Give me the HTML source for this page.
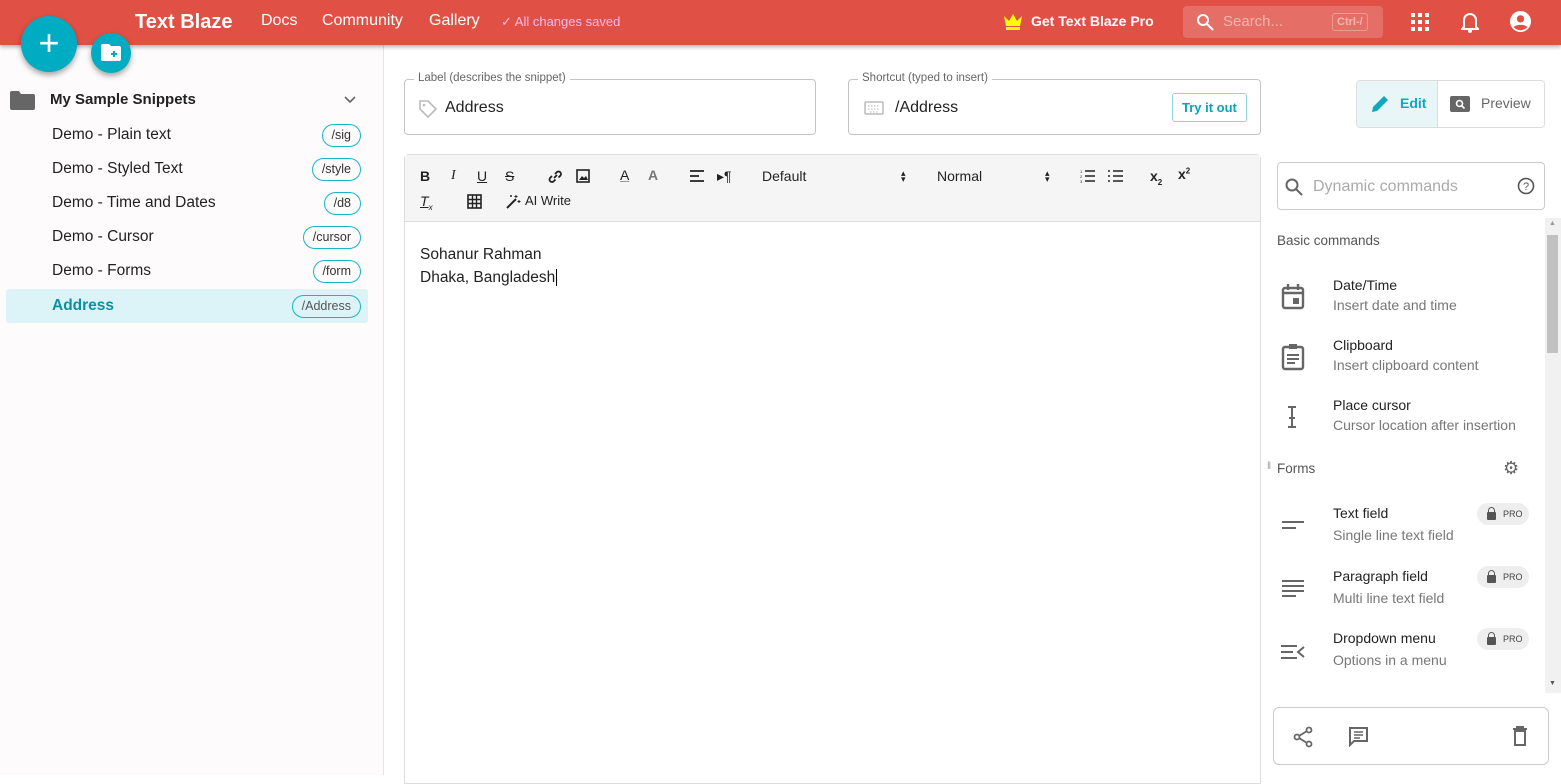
<!DOCTYPE html>
<html><head><meta charset="utf-8"><style>
*{box-sizing:border-box;margin:0;padding:0}
body{width:1561px;height:775px;overflow:hidden;font-family:"Liberation Sans",sans-serif;background:#fff;position:relative;color:#222}
.a{position:absolute}
#hdr{left:0;top:0;width:1561px;height:45px;background:#e05045;box-shadow:0 2px 4px rgba(0,0,0,.3);z-index:2}
#hdr .t{color:#fff;position:absolute;top:12px;font-size:16px}
#side{left:0;top:45px;width:384px;height:730px;background:#fdfbfc;border-right:1px solid #e4e4e4}
.it{position:absolute;left:6px;width:362px;height:34px}
.it span.n{position:absolute;left:46px;top:8px;font-size:15.5px;color:#222}
.it span.b{position:absolute;right:7px;top:6px;height:23px;border:1.5px solid #1ab5c9;border-radius:12px;font-size:12.5px;padding:3px 9px;color:#333}
.fab{border-radius:50%;background:#00acc1;box-shadow:0 3px 6px rgba(0,0,0,.35);z-index:3;color:#fff;text-align:center}
.fs{border:1px solid #c4c4c4;border-radius:4px;height:56px}
.lg{position:absolute;top:-8px;left:9px;background:#fff;padding:0 4px;font-size:11.5px;color:#666}
.tb{font-size:14px;color:#222;position:absolute}
.cmd{position:absolute;left:1277px;width:260px}
.cmd .h{position:absolute;left:56px;font-size:14px;color:#222}
.cmd .s{position:absolute;left:56px;top:20px;font-size:14px;color:#777}
.pro{position:absolute;left:200px;top:-2px;width:52px;height:22px;background:#eee;border-radius:11px;font-size:9px;color:#444;padding:6px 0 0 26px}
.pro:before{content:"";position:absolute;left:10px;top:9px;width:9px;height:8px;background:#555;border-radius:1px}
.pro:after{content:"";position:absolute;left:11px;top:4px;width:5px;height:6px;border:1.5px solid #555;border-bottom:none;border-radius:4px 4px 0 0}
</style></head><body>
<div id="hdr" class="a">
<span class="t" style="left:135px;top:11px;font-size:20px;font-weight:bold">Text Blaze</span>
<span class="t" style="left:261px">Docs</span>
<span class="t" style="left:322px">Community</span>
<span class="t" style="left:429px">Gallery</span>
<span class="t" style="left:501px;top:14px;font-size:13px;color:#fbe">✓ All changes saved</span>
<svg class="a" style="left:1003px;top:13px" width="20" height="18" viewBox="0 0 20 18"><path d="M1 3l5 5 4-7 4 7 5-5-2 10H3z" fill="#ff0"/><rect x="3" y="14" width="14" height="3" fill="#ff0"/></svg>
<span class="t" style="left:1031px;top:13px;font-size:14px;font-weight:bold">Get Text Blaze Pro</span>
<div class="a" style="left:1183px;top:6px;width:200px;height:32px;background:rgba(255,255,255,.18);border-radius:4px">
<svg class="a" style="left:13px;top:7px" width="18" height="18" viewBox="0 0 18 18"><circle cx="7" cy="7" r="5" stroke="#fff" stroke-width="2" fill="none"/><path d="M11 11l6 6" stroke="#fff" stroke-width="2"/></svg>
<span class="a" style="left:40px;top:7px;color:#f5b5ae;font-size:15px">Search...</span>
<span class="a" style="left:149px;top:7px;border:1px solid rgba(255,255,255,.3);border-radius:3px;font-size:11px;color:#f5b5ae;padding:2px 4px;font-weight:bold">Ctrl-/</span></div>
<svg class="a" style="left:1411px;top:13px" width="18" height="18" viewBox="0 0 18 18" fill="#fff"><rect x="0" y="0" width="4" height="4"/><rect x="7" y="0" width="4" height="4"/><rect x="14" y="0" width="4" height="4"/><rect x="0" y="7" width="4" height="4"/><rect x="7" y="7" width="4" height="4"/><rect x="14" y="7" width="4" height="4"/><rect x="0" y="14" width="4" height="4"/><rect x="7" y="14" width="4" height="4"/><rect x="14" y="14" width="4" height="4"/></svg>
<svg class="a" style="left:1461px;top:11px" width="18" height="22" viewBox="0 0 18 22"><path d="M3 16V9a6 6 0 0112 0v7l2 2H1z" fill="none" stroke="#fff" stroke-width="2"/><circle cx="9" cy="20" r="2" fill="#fff"/></svg>
<svg class="a" style="left:1510px;top:11px" width="21" height="21" viewBox="0 0 20 20"><circle cx="10" cy="10" r="10" fill="#fff"/><circle cx="10" cy="7.5" r="3.5" fill="#e05045"/><path d="M3.5 15.5c2-3 11-3 13 0a9 9 0 01-13 0z" fill="#e05045"/></svg>
</div>
<div class="a fab" style="left:21px;top:16px;width:56px;height:56px;font-size:36px;line-height:54px">+</div>
<div class="a fab" style="left:91px;top:33px;width:40px;height:40px"><svg style="margin-top:11px" width="20" height="17" viewBox="0 0 20 17"><path d="M0 2a2 2 0 012-2h6l2 2h8a2 2 0 012 2v11a2 2 0 01-2 2H2a2 2 0 01-2-2z" fill="#fff"/><path d="M13 7v6M10 10h6" stroke="#00acc1" stroke-width="2"/></svg></div>
<div id="side" class="a">
<svg class="a" style="left:10px;top:46px" width="25" height="19" viewBox="0 0 25 19"><path d="M0 2a2 2 0 012-2h7l2 3h12a2 2 0 012 2v12a2 2 0 01-2 2H2a2 2 0 01-2-2z" fill="#666"/></svg>
<span class="a" style="left:50px;top:46px;font-size:15px;font-weight:bold">My Sample Snippets</span>
<svg class="a" style="left:344px;top:51px" width="12" height="8" viewBox="0 0 12 8"><path d="M1 1l5 5 5-5" stroke="#666" stroke-width="1.6" fill="none"/></svg>
<div class="it" style="top:73px"><span class="n">Demo - Plain text</span><span class="b">/sig</span></div>
<div class="it" style="top:107px"><span class="n">Demo - Styled Text</span><span class="b">/style</span></div>
<div class="it" style="top:141px"><span class="n">Demo - Time and Dates</span><span class="b">/d8</span></div>
<div class="it" style="top:175px"><span class="n">Demo - Cursor</span><span class="b">/cursor</span></div>
<div class="it" style="top:209px"><span class="n">Demo - Forms</span><span class="b">/form</span></div>
<div class="it" style="top:244px;background:#dcf3f7;border-radius:3px"><span class="n" style="color:#0e8fa0;font-weight:bold">Address</span><span class="b" style="color:#555">/Address</span></div>
</div>
<div class="a fs" style="left:404px;top:79px;width:412px"><span class="lg">Label (describes the snippet)</span>
<svg class="a" style="left:13px;top:19px" width="20" height="20" viewBox="0 0 20 20"><path d="M2 2h8l8 8-8 8-8-8z" fill="none" stroke="#bbb" stroke-width="1.6"/><circle cx="6" cy="6" r="1.3" fill="#bbb"/></svg>
<span class="a" style="left:40px;top:19px;font-size:16px">Address</span></div>
<div class="a fs" style="left:848px;top:79px;width:413px"><span class="lg">Shortcut (typed to insert)</span>
<svg class="a" style="left:15px;top:21px" width="20" height="14" viewBox="0 0 20 14"><rect x="1" y="1" width="18" height="12" rx="1" fill="none" stroke="#bbb" stroke-width="1.5"/><path d="M4 5h12M4 8h12M6 11h8" stroke="#bbb" stroke-dasharray="1.5 1.5"/></svg>
<span class="a" style="left:46px;top:19px;font-size:16px">/Address</span>
<span class="a" style="left:323px;top:13px;border:1px solid #8fd7e0;border-radius:3px;color:#0aa3b8;font-size:13px;font-weight:bold;padding:6px 9px">Try it out</span></div>
<div class="a" style="left:1356px;top:80px;width:189px;height:48px;border:1px solid #ddd;border-radius:4px;overflow:hidden">
<div class="a" style="left:0;top:0;width:81px;height:48px;background:#e8f6f8;border-right:1px solid #ddd"></div>
<svg class="a" style="left:13px;top:13px" width="20" height="20" viewBox="0 0 20 20"><path d="M2 18l1-5L14 2l4 4L7 17z" fill="#12a8bb"/></svg>
<span class="a" style="left:43px;top:14px;color:#12a8bb;font-size:14px;font-weight:bold">Edit</span>
<svg class="a" style="left:93px;top:15px" width="20" height="16" viewBox="0 0 20 16"><rect width="20" height="16" rx="2" fill="#666"/><circle cx="9.5" cy="7.5" r="3" stroke="#fff" stroke-width="1.6" fill="none"/><path d="M11.5 9.5l3 3" stroke="#fff" stroke-width="1.6"/></svg>
<span class="a" style="left:124px;top:14px;color:#666;font-size:14px">Preview</span></div>
<div class="a" style="left:404px;top:154px;width:857px;height:630px;border:1px solid #ddd;border-radius:5px 5px 0 0">
<div class="a" style="left:0;top:0;width:855px;height:67px;background:#f5f5f5;border-bottom:1px solid #ddd">
<span class="tb" style="left:15px;top:13px;font-weight:bold">B</span>
<span class="tb" style="left:46px;top:13px;font-style:italic;font-family:'Liberation Serif'">I</span>
<span class="tb" style="left:72px;top:13px;text-decoration:underline">U</span>
<span class="tb" style="left:100px;top:13px;text-decoration:line-through">S</span>
<svg class="a" style="left:142px;top:14px" width="16" height="16" viewBox="0 0 16 16"><path d="M7 9l3-3M5 7L3 9a2.5 2.5 0 003.5 3.5L8.5 10.5M8 5l2-2a2.5 2.5 0 013.5 3.5L11.5 8.5" stroke="#222" stroke-width="1.8" fill="none"/></svg>
<svg class="a" style="left:171px;top:14px" width="14" height="14"><rect x="1" y="1" width="12" height="12" fill="none" stroke="#222" stroke-width="1.6"/><path d="M3 11l3-4 2 2 2-2 2 4z" fill="#222"/></svg>
<span class="tb" style="left:215px;top:12px;text-decoration:underline;text-decoration-color:#999">A</span>
<span class="tb" style="left:243px;top:12px;color:#777;font-weight:bold">A</span>
<svg class="a" style="left:285px;top:15px" width="14" height="12"><path d="M0 1h14M0 6h9M0 11h14" stroke="#222" stroke-width="1.8"/></svg>
<span class="tb" style="left:312px;top:13px">▸¶</span>
<span class="tb" style="left:357px;top:13px">Default</span>
<span class="tb" style="left:532px;top:13px">Normal</span>
<span class="tb" style="left:496px;top:15px;font-size:9px;line-height:6px">▴<br>▾</span>
<span class="tb" style="left:640px;top:15px;font-size:9px;line-height:6px">▴<br>▾</span>
<svg class="a" style="left:675px;top:14px" width="15" height="14"><path d="M5 2h10M5 7h10M5 12h10" stroke="#222" stroke-width="1.6"/><text x="0" y="4" font-size="4" fill="#222">1</text><text x="0" y="9" font-size="4" fill="#222">2</text><text x="0" y="14" font-size="4" fill="#222">3</text></svg>
<svg class="a" style="left:703px;top:14px" width="15" height="14"><path d="M5 2h10M5 7h10M5 12h10M0 2h2M0 7h2M0 12h2" stroke="#222" stroke-width="1.6"/></svg>
<span class="tb" style="left:745px;top:13px;font-weight:bold">x<sub style="font-size:8px">2</sub></span>
<span class="tb" style="left:773px;top:11px;font-weight:bold">x<sup style="font-size:8px">2</sup></span>
<span class="tb" style="left:15px;top:38px;font-style:italic;text-decoration:underline">T<sub style="font-size:8px">x</sub></span>
<svg class="a" style="left:62px;top:39px" width="15" height="15"><rect x="1" y="1" width="13" height="13" fill="none" stroke="#222" stroke-width="1.6"/><path d="M1 5.5h13M1 9.5h13M5.5 1v13M9.5 1v13" stroke="#222" stroke-width="1.4"/></svg>
<svg class="a" style="left:100px;top:39px" width="16" height="16" viewBox="0 0 16 16"><path d="M2 14l9-9" stroke="#222" stroke-width="2"/><path d="M11 1v3M9.5 2.5h3M14 6v3M12.5 7.5h3M6 1v2M5 2h2" stroke="#222" stroke-width="1"/></svg>
<span class="tb" style="left:120px;top:38px;font-size:13px">AI Write</span>
</div>
<div class="a" style="left:15px;top:88px;font-size:15.5px;line-height:23px">Sohanur Rahman<br>Dhaka, Bangladesh<span style="border-left:1px solid #000;margin-left:1px"></span></div>
</div>
<div class="a" style="left:1277px;top:162px;width:268px;height:48px;border:1px solid #ccc;border-radius:4px">
<svg class="a" style="left:6px;top:14px" width="20" height="20" viewBox="0 0 20 20"><circle cx="8" cy="8" r="5.5" stroke="#666" stroke-width="2" fill="none"/><path d="M12 12l6 6" stroke="#666" stroke-width="2"/></svg>
<span class="a" style="left:35px;top:15px;font-size:16px;color:#aaa">Dynamic commands</span>
<svg class="a" style="left:239px;top:14px" width="18" height="18"><circle cx="9" cy="9" r="7.5" stroke="#555" stroke-width="1.6" fill="none"/><text x="9" y="13" font-size="11" text-anchor="middle" fill="#555" font-family="Liberation Sans">?</text></svg></div>
<div class="a" style="left:1545px;top:218px;width:16px;height:475px;background:#f1f1f1"><div class="a" style="left:2px;top:17px;width:11px;height:118px;background:#c1c1c1"></div><span class="a" style="left:4px;top:2px;font-size:7px;color:#999">▲</span><span class="a" style="left:4px;top:462px;font-size:7px;color:#555">▼</span></div>
<span class="a" style="left:1277px;top:233px;font-size:13.5px;color:#555">Basic commands</span>
<div class="cmd" style="top:277px"><svg class="a" style="left:4px;top:6px" width="24" height="28" viewBox="0 0 24 28"><rect x="2" y="5" width="20" height="20" rx="2" fill="none" stroke="#666" stroke-width="2.4"/><path d="M2 10h20M7 1v6M17 1v6" stroke="#666" stroke-width="2.4"/><rect x="12" y="15" width="6" height="6" fill="#666"/></svg><span class="h">Date/Time</span><span class="s">Insert date and time</span></div>
<div class="cmd" style="top:337px"><svg class="a" style="left:4px;top:6px" width="24" height="28" viewBox="0 0 24 28"><rect x="2" y="4" width="20" height="22" rx="2" fill="none" stroke="#666" stroke-width="2.4"/><rect x="8" y="1" width="8" height="5" fill="#666"/><path d="M6 12h12M6 16h12M6 20h8" stroke="#666" stroke-width="2"/></svg><span class="h">Clipboard</span><span class="s">Insert clipboard content</span></div>
<div class="cmd" style="top:397px"><svg class="a" style="left:8px;top:8px" width="14" height="24" viewBox="0 0 14 24"><path d="M3 2h8M7 2v20M3 22h8M4 13h6" stroke="#666" stroke-width="2"/></svg><span class="h">Place cursor</span><span class="s">Cursor location after insertion</span></div>
<span class="a" style="left:1267px;top:461px;font-size:10px;color:#999">‖</span>
<span class="a" style="left:1277px;top:461px;font-size:13.5px;color:#555">Forms</span>
<span class="a" style="left:1503px;top:458px;font-size:18px;color:#666">⚙</span>
<div class="cmd" style="top:505px"><svg class="a" style="left:5px;top:15px" width="22" height="10"><path d="M0 2h22M0 8h14" stroke="#666" stroke-width="2"/></svg><span class="h">Text field</span><span class="s" style="top:22px">Single line text field</span><span class="pro">PRO</span></div>
<div class="cmd" style="top:568px"><svg class="a" style="left:5px;top:11px" width="22" height="18"><path d="M0 2h22M0 7h22M0 12h22M0 17h14" stroke="#666" stroke-width="2"/></svg><span class="h">Paragraph field</span><span class="s" style="top:22px">Multi line text field</span><span class="pro">PRO</span></div>
<div class="cmd" style="top:630px"><svg class="a" style="left:4px;top:14px" width="24" height="16"><path d="M0 2h16M0 8h12M0 14h16M23 3l-6 5 6 5" stroke="#666" stroke-width="2" fill="none"/></svg><span class="h">Dropdown menu</span><span class="s" style="top:22px">Options in a menu</span><span class="pro">PRO</span></div>
<div class="a" style="left:1273px;top:707px;width:276px;height:58px;border:1px solid #ccc;border-radius:6px">
<svg class="a" style="left:19px;top:18px" width="20" height="22" viewBox="0 0 20 22"><circle cx="16" cy="4" r="2.5" fill="none" stroke="#666" stroke-width="1.8"/><circle cx="4" cy="11" r="2.5" fill="none" stroke="#666" stroke-width="1.8"/><circle cx="16" cy="18" r="2.5" fill="none" stroke="#666" stroke-width="1.8"/><path d="M6 10l8-5M6 12l8 5" stroke="#666" stroke-width="1.8"/></svg>
<svg class="a" style="left:74px;top:18px" width="21" height="21" viewBox="0 0 21 21"><path d="M2 2h17v13H6l-4 4z" fill="none" stroke="#666" stroke-width="2"/><path d="M6 6h9M6 9h9M6 12h6" stroke="#666" stroke-width="1.6"/></svg>
<svg class="a" style="left:238px;top:18px" width="16" height="20" viewBox="0 0 16 20"><path d="M1 3h14M5 3V1h6v2M3 5h10v14H3z" fill="none" stroke="#666" stroke-width="2"/></svg>
</div>
</body></html>
